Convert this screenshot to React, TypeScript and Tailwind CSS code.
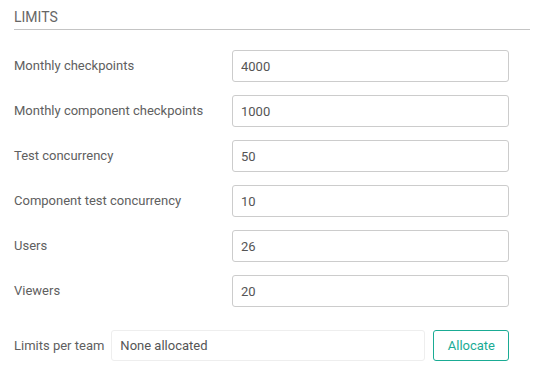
import React from "react";

const LIMITS = [
  { label: "Monthly checkpoints", value: "4000" },
  { label: "Monthly component checkpoints", value: "1000" },
  { label: "Test concurrency", value: "50" },
  { label: "Component test concurrency", value: "10" },
  { label: "Users", value: "26" },
  { label: "Viewers", value: "20" },
];

export default function App() {
  return (
    <div className="w-[535px] h-[372px] bg-white text-[13px] text-[#606060] font-['Roboto',sans-serif] overflow-hidden">
      {/* header */}
      <div className="ml-[14px] w-[516px] pt-[9px] pb-[4px] border-b border-[#c4c4c4]">
        <h2 className="text-[14px] leading-[16px] text-[#666] font-normal">LIMITS</h2>
      </div>

      {/* limit rows */}
      <div className="mt-[20px] ml-[14px] flex flex-col gap-[13px]">
        {LIMITS.map((l) => (
          <div key={l.label} className="flex items-center">
            <label className="w-[218px] leading-[16px]">{l.label}</label>
            <input
              defaultValue={l.value}
              className="w-[277px] h-[32px] px-[8px] border border-[#ccc] rounded-[3px] text-[#555] outline-none"
            />
          </div>
        ))}
      </div>

      {/* per team */}
      <div className="mt-[23px] ml-[14px] flex items-center">
        <span className="leading-[16px] mr-[7px]">Limits per team</span>
        <div className="w-[314px] h-[31px] px-[8px] flex items-center border border-[#eee] rounded-[3px] text-[#555]">
          None allocated
        </div>
        <button className="ml-[8px] w-[76px] h-[31px] border border-[#1aab94] rounded-[3px] text-[#1aab94] bg-white">
          Allocate
        </button>
      </div>
    </div>
  );
}
